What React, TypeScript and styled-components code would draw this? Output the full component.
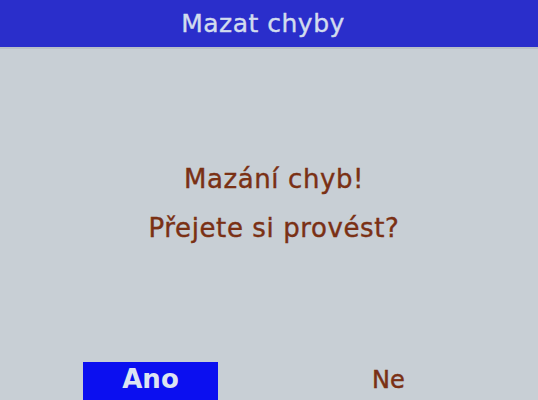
import styled, { createGlobalStyle } from 'styled-components'

const GlobalStyle = createGlobalStyle`
  html, body {
    margin: 0;
    padding: 0;
    background: #c8cfd5;
  }
`

const Screen = styled.div`
  width: 538px;
  height: 400px;
  overflow: hidden;
  display: flex;
  flex-direction: column;
  background: #c8cfd5;
  font-family: "DejaVu Sans", "Liberation Sans", sans-serif;
`

const TitleBar = styled.div`
  height: 47px;
  flex: none;
  display: flex;
  align-items: center;
  justify-content: center;
  padding-right: 12px;
  background: #2a2ecb;
  color: #d2dcee;
  font-size: 25px;
  letter-spacing: 0.5px;
  -webkit-text-stroke: 0.4px #d2dcee;
  border-bottom: 2px solid #b9c0c8;
`

const Message = styled.div`
  flex: 1;
  display: flex;
  flex-direction: column;
  align-items: center;
  padding-top: 114px;
  padding-left: 10px;
  gap: 16px;
  color: #7a3014;
  font-size: 26px;
  line-height: 33px;
  letter-spacing: 0.6px;
  -webkit-text-stroke: 0.4px #7a3014;
`

const Footer = styled.div`
  flex: none;
  height: 38px;
  display: flex;
  align-items: flex-start;
  padding-left: 83px;
`

const Choice = styled.div<{ $selected?: boolean }>`
  width: ${p => (p.$selected ? '135px' : 'auto')};
  height: 40px;
  display: flex;
  justify-content: center;
  box-sizing: border-box;
  padding-top: ${p => (p.$selected ? '2px' : '3px')};
  line-height: 30px;
  font-size: ${p => (p.$selected ? '26px' : '24px')};
  font-weight: ${p => (p.$selected ? 'bold' : 'normal')};
  background: ${p => (p.$selected ? '#0b0ff0' : 'transparent')};
  color: ${p => (p.$selected ? '#dde4f2' : '#7a3014')};
  -webkit-text-stroke: ${p => (p.$selected ? '0' : '0.5px #7a3014')};
  margin-left: ${p => (p.$selected ? '0' : '154px')};
`

export default function App() {
  return (
    <>
      <GlobalStyle />
      <Screen>
        <TitleBar>Mazat chyby</TitleBar>
        <Message>
          <div>Mazání chyb!</div>
          <div>Přejete si provést?</div>
        </Message>
        <Footer>
          <Choice $selected>Ano</Choice>
          <Choice>Ne</Choice>
        </Footer>
      </Screen>
    </>
  )
}
